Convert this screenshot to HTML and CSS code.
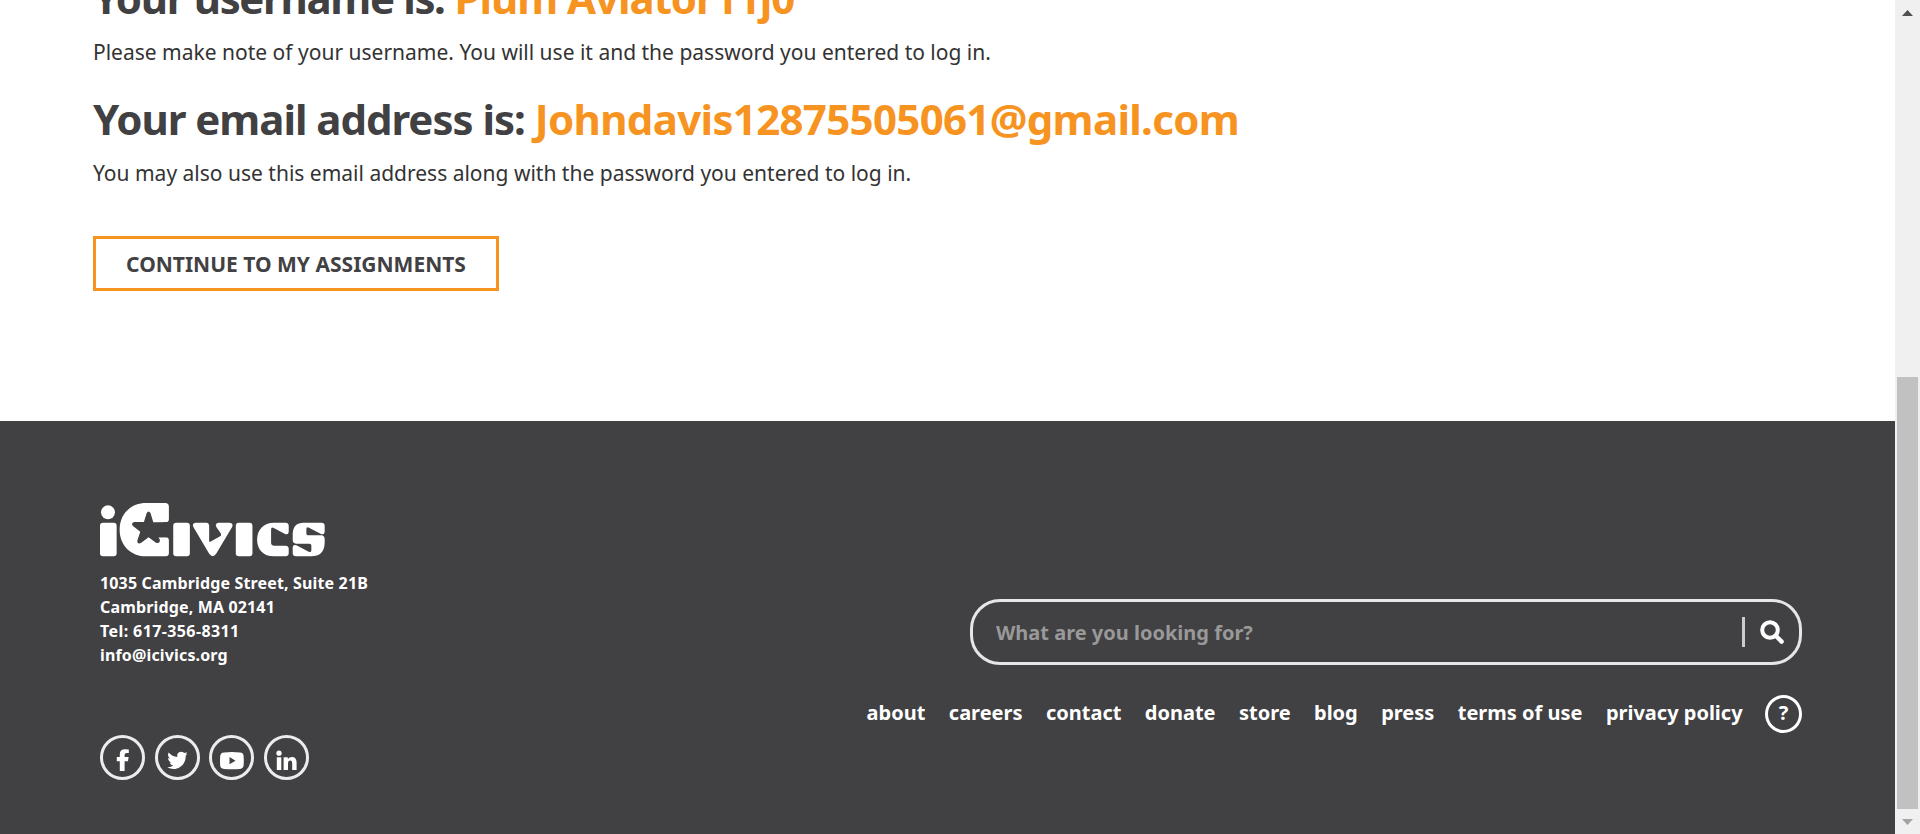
FILE: index.html
```html
<!DOCTYPE html>
<html lang="en">
<head>
<meta charset="utf-8">
<title>iCivics</title>
<link rel="stylesheet" href="styles.css">
</head>
<body>
<div class="viewport">
  <div class="page">
    <main class="content">
      <h2 class="heading"><span class="label label-user">Your username is:</span> <span class="value value-user">Plum Aviator11j0</span></h2>
      <p class="note">Please make note of your username. You will use it and the password you entered to log in.</p>
      <h2 class="heading"><span class="label label-email">Your email address is:</span> <span class="value">Johndavis12875505061@gmail.com</span></h2>
      <p class="note">You may also use this email address along with the password you entered to log in.</p>
      <a class="continue">CONTINUE TO MY ASSIGNMENTS</a>
    </main>
    <footer class="footer">
      <div class="about">
        <svg class="logo" viewBox="30 38 676 162" role="img" aria-label="iCivics">
          <g fill="#fff">
            <circle cx="54" cy="66" r="21"/>
            <rect x="30" y="97" width="50" height="101" rx="9"/>
            <path fill-rule="evenodd" d="M169 38H226Q237 38 237 49V86Q237 96 227 96H190L182 69Q176 58 170 69L162 95H133Q122 98 129 107L151 124L142 151Q142 163 153 158L176 141L198 157Q210 161 210 149L206 141H227Q237 141 237 151V188Q237 198 227 198H169C122 198 89 165 89 118S122 38 169 38Z"/>
            <path d="M190 95H230V141H206L201 125L221 108Q228 98 218 96Z" fill="#414042"/>
            <rect x="250" y="97" width="50" height="101" rx="9"/>
            <path d="M317 97H350Q357 97 358 106V151Q358 157 364 153L391 138Q396 134 392 128L379 109Q375 98 386 97H418Q432 98 427 110L379 190Q369 205 358 190L311 111Q305 98 317 97Z"/>
            <rect x="438" y="97" width="50" height="101" rx="9"/>
            <path d="M552 97H587Q597 97 597 107V123Q597 135 586 131L552 113Q544 109 544 118V158Q545 166 553 166H587Q597 166 597 176V188Q597 198 587 198H552C522 198 502 178 502 148S522 97 552 97Z"/>
            <path d="M642 97H695Q705 97 705 107V125Q704 134 694 131L658 112Q650 108 650 117V130Q650 135 656 135H695Q705 136 705 147V158Q704 198 664 198H619Q609 198 609 188V171Q610 161 620 165L657 184Q665 188 665 180V165Q665 160 659 160H619Q609 159 609 149V130Q610 97 642 97Z"/>
          </g>
        </svg>
        <address class="address">
          <span>1035 Cambridge Street, Suite 21B</span>
          <span>Cambridge, MA 02141</span>
          <span class="tel">Tel: 617-356-8311</span>
          <span>info@icivics.org</span>
        </address>
        <div class="social">
          <a class="round" aria-label="Facebook"><svg viewBox="0 0 45 45"><path d="M19.8 36V26.2H16.8V22H19.8V19.3Q19.8 14.2 25 14.2Q27.5 14.2 28.8 14.5V18.1H26.7Q24.6 18.1 24.6 20V22H28.6L28 26.2H24.6V36Z"/></svg></a>
          <a class="round" aria-label="Twitter"><svg viewBox="0 0 45 45"><path d="M32.6 19.2Q31.6 20 30.7 20.7C31 28.5 25.3 34 18.5 34Q15 34 12.2 32.2Q15.9 32.4 18.4 30.4Q15.5 30 14.6 27.4H16.4Q13.1 26.2 13.1 23L14.9 23.4Q12 21 13.6 17.6Q17.2 21.8 22.4 22C21.5 18.5 23.7 16.8 26.4 16.8Q28.4 16.9 29.5 18.1L32 17.2Q31.7 18.6 30.3 19.6Z"/></svg></a>
          <a class="round" aria-label="YouTube"><svg viewBox="0 0 45 45"><path fill-rule="evenodd" d="M15 17.4Q22.5 16.8 31 17.4Q34.5 17.6 34.6 21Q35 26 34.6 30.5Q34.3 33.5 31 33.9Q23 34.4 15 33.9Q11.5 33.7 11.2 30.5Q10.8 26 11.2 21Q11.4 17.7 15 17.4ZM20.5 22V29.3L26.5 25.7Z"/></svg></a>
          <a class="round" aria-label="LinkedIn"><svg viewBox="0 0 45 45"><circle cx="15" cy="18.2" r="2.6"/><path d="M12.8 22.2H17.3V35H12.8ZM19.6 22.2H23.8V24Q25.2 21.9 28 21.9Q32.6 21.9 32.6 27.5V35H28.2V28.5Q28.2 25.6 26.2 25.6Q24 25.6 24 28.5V35H19.6Z"/></svg></a>
        </div>
      </div>
      <div class="tools">
        <div class="search">
          <span class="placeholder">What are you looking for?</span>
          <span class="divider"></span>
          <svg class="glass" viewBox="0 0 24 24"><circle cx="10" cy="10" r="7.8" fill="none" stroke="#fff" stroke-width="4"/><path d="M15.8 15.8L21.6 21.6" stroke="#fff" stroke-width="4.4" stroke-linecap="round"/></svg>
        </div>
        <nav class="links">
          <a>about</a><a>careers</a><a>contact</a><a>donate</a><a>store</a><a>blog</a><a>press</a><a>terms of use</a><a>privacy policy</a>
          <a class="help">?</a>
        </nav>
      </div>
    </footer>
  </div>
  <div class="scrollbar">
    <svg class="arrow" viewBox="0 0 11 6"><path d="M5.5 0L11 6H0Z" fill="#505050"/></svg>
    <div class="track"><div class="thumb"></div></div>
    <svg class="arrow" viewBox="0 0 11 6"><path d="M0 0H11L5.5 6Z" fill="#a3a3a3"/></svg>
  </div>
</div>
</body>
</html>
```
FILE: styles.css
```css
* { box-sizing: border-box; }
body { margin: 0; background: #fff; color: #414042; font-family: "Noto Sans", "Open Sans", sans-serif; }
.viewport { display: flex; height: 834px; overflow: hidden; }
.page { flex: 1; min-width: 0; display: flex; flex-direction: column; }
.content { height: 421px; padding-left: 93px; }
.heading { margin: -32px 0 0; height: 60px; font-size: 42px; font-weight: 700; line-height: 60px; white-space: nowrap; display: flex; gap: 10px; }
.note + .heading { margin-top: 21px; }
.label-user { letter-spacing: -1.35px; }
.label-email { letter-spacing: -1.03px; }
.value { color: #f79320; letter-spacing: -0.67px; }
.value-user { letter-spacing: -1.05px; }
.note { margin: 8px 0 0; height: 32px; font-size: 21px; line-height: 32px; color: #333; white-space: nowrap; }
.continue { display: flex; align-items: center; justify-content: center; width: 406px; height: 55px; margin-top: 47px; border: 3px solid #f79320; font-size: 21px; font-weight: 700; }
.footer { flex: 1; display: flex; justify-content: space-between; padding: 82px 93px 0 100px; background: #414042; color: #fff; }
.about { display: flex; flex-direction: column; }
.logo { width: 225px; height: 54px; }
.address { display: flex; flex-direction: column; margin-top: 14px; font-style: normal; font-weight: 700; font-size: 16px; line-height: 24px; letter-spacing: 0.15px; white-space: nowrap; }
.tel { letter-spacing: 0.4px; }
.social { display: flex; gap: 9.7px; margin-top: 68px; }
.round { width: 45px; height: 45px; border: 3px solid #ececec; border-radius: 50%; }
.round svg { display: block; width: 45px; height: 45px; margin: -3px; fill: #fff; }
.tools { display: flex; flex-direction: column; align-items: flex-end; padding-top: 96px; }
.search { display: flex; align-items: center; width: 832px; height: 66px; padding: 0 15px 0 23px; border: 3px solid #e6e6e6; border-radius: 30px; }
.placeholder { flex: 1; color: #999; font-size: 20px; font-weight: 700; }
.divider { width: 3px; height: 30px; margin-right: 15px; background: #ccc; }
.glass { width: 24px; height: 24px; }
.links { display: flex; align-items: center; gap: 23.4px; margin-top: 30px; height: 38px; font-size: 20px; font-weight: 700; line-height: 28px; white-space: nowrap; }
.links a { padding-bottom: 2px; }
.links .help { display: flex; align-items: center; justify-content: center; width: 37px; height: 38px; margin-left: -1px; border: 3px solid #fff; border-radius: 50%; }
.scrollbar { width: 25px; display: flex; flex-direction: column; align-items: center; padding: 10px 0 9px; background: #f0f0f0; }
.arrow { width: 11px; height: 6px; }
.track { flex: 1; width: 21px; padding: 361px 0 10px; display: flex; }
.thumb { flex: 1; background: #c1c1c1; }
```
